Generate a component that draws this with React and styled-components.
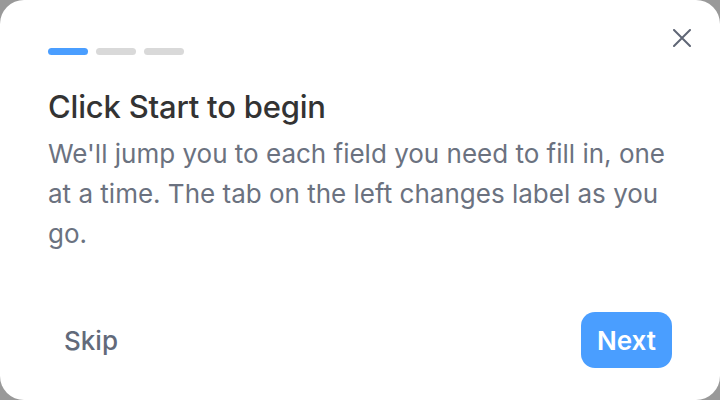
import React from "react";
import styled, { createGlobalStyle } from "styled-components";

const Global = createGlobalStyle`
  html, body { margin: 0; padding: 0; background: #999999; }
  body { font-family: "Inter", "Noto Sans", sans-serif; }
  * { box-sizing: border-box; }
`;

const Card = styled.div`
  position: relative;
  width: 720px;
  height: 400px;
  background: #ffffff;
  border-radius: 24px;
  padding: 48px 48px 32px 48px;
  display: flex;
  flex-direction: column;
`;

const Steps = styled.div`
  display: flex;
  gap: 8px;
`;

const Step = styled.span`
  width: 40px;
  height: 7px;
  border-radius: 4px;
  background: ${(p) => (p.$active ? "#4a9eff" : "#d9d9d9")};
`;

const CloseButton = styled.button`
  position: absolute;
  top: 26px;
  right: 26px;
  width: 24px;
  height: 24px;
  padding: 0;
  border: none;
  background: transparent;
  display: flex;
  align-items: center;
  justify-content: center;
  color: #5f6675;
  cursor: pointer;
`;

const Title = styled.h2`
  margin: 33px 0 0 0;
  font-size: 31px;
  line-height: 38px;
  font-weight: 500;
  color: #333333;
  letter-spacing: -0.2px;
`;

const Body = styled.p`
  margin: 8px 0 0 0;
  font-size: 26px;
  line-height: 40px;
  font-weight: 400;
  color: #6b7280;
`;

const Footer = styled.div`
  margin-top: auto;
  display: flex;
  align-items: center;
  justify-content: space-between;
`;

const TextButton = styled.button`
  border: none;
  background: transparent;
  font-family: inherit;
  font-size: 26px;
  font-weight: 500;
  color: #626a7a;
  padding: 12px 16px;
  cursor: pointer;
`;

const PrimaryButton = styled.button`
  border: none;
  background: #4a9eff;
  color: #ffffff;
  font-family: inherit;
  font-size: 26px;
  font-weight: 600;
  height: 56px;
  padding: 0 16px;
  border-radius: 14px;
  cursor: pointer;
`;

export default function App() {
  return (
    <>
      <Global />
      <Card>
        <Steps>
          <Step $active />
          <Step />
          <Step />
        </Steps>
        <CloseButton aria-label="Close">
          <svg width="18" height="18" viewBox="0 0 18 18" fill="none" stroke="currentColor" strokeWidth="2" strokeLinecap="round">
            <path d="M1 1L17 17M17 1L1 17" />
          </svg>
        </CloseButton>
        <Title>Click Start to begin</Title>
        <Body>
          We'll jump you to each field you need to fill in, one at a time. The tab on the left changes label as you go.
        </Body>
        <Footer>
          <TextButton>Skip</TextButton>
          <PrimaryButton>Next</PrimaryButton>
        </Footer>
      </Card>
    </>
  );
}
